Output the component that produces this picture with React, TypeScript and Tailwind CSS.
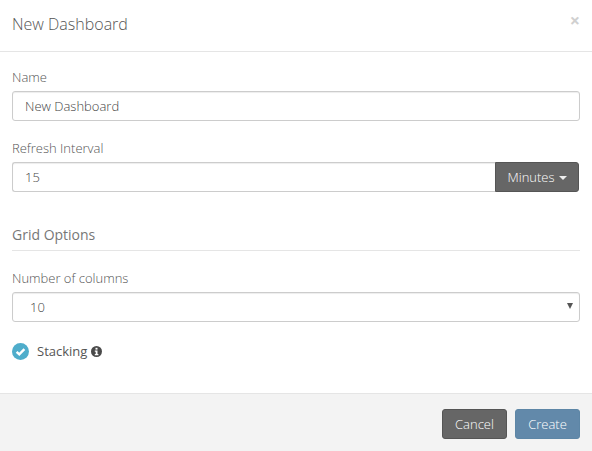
export default function App() {
  return (
    <div className="flex h-[451px] w-[592px] flex-col overflow-hidden bg-white font-['Open_Sans',sans-serif] text-[13px] font-light text-[#444]">
      <div className="flex h-[52px] items-start justify-between border-b border-[#e5e5e5] pl-3 pr-[12px] pt-[13px]">
        <h4 className="text-[16px] leading-[22px] font-light text-[#555]">New Dashboard</h4>
        <span className="text-[18px] leading-[14px] font-bold text-[#d0d0d0]">×</span>
      </div>

      <div className="flex-1 px-3 pt-[16px]">
        <label className="block h-[23px] text-[13px] leading-[18px] text-[#555]">Name</label>
        <div className="flex h-[30px] items-center rounded-[3px] border border-[#ccc] pl-3 pt-px shadow-[inset_0_1px_1px_rgba(0,0,0,0.075)]">
          New Dashboard
        </div>

        <label className="mt-[18px] block h-[23px] text-[13px] leading-[18px] text-[#555]">Refresh Interval</label>
        <div className="flex h-[30px]">
          <div className="flex flex-1 items-center rounded-l-[3px] border border-r-0 border-[#ccc] pl-3 pt-px shadow-[inset_0_1px_1px_rgba(0,0,0,0.075)]">
            15
          </div>
          <div className="mr-px flex w-[84px] items-center justify-center gap-1 rounded-r-[3px] border border-[#555] bg-[#666] pt-px text-[#fff]">
            Minutes
            <span className="mt-[1px] h-0 w-0 border-x-4 border-t-4 border-x-transparent border-t-[#eee]" />
          </div>
        </div>

        <div className="mt-[33px] h-[26px] border-b border-[#e5e5e5] text-[14px] leading-[20px] font-normal text-[#777]">Grid Options</div>

        <label className="mt-[18px] block h-[23px] text-[13px] leading-[18px] text-[#555]">Number of columns</label>
        <div className="relative flex h-[30px] items-center rounded-[3px] border border-[#ccc] pl-[17px] pt-px shadow-[inset_0_1px_1px_rgba(0,0,0,0.075)]">
          10
          <span className="absolute right-[6px] top-[10px] h-0 w-0 border-x-[3.5px] border-t-[6px] border-x-transparent border-t-[#555]" />
        </div>

        <div className="mt-[20px] flex items-center">
          <svg width="17" height="17" viewBox="0 0 17 17">
            <circle cx="8.5" cy="8.5" r="8.5" fill="#4fadcb" />
            <path d="M4.6 8.8 7.3 11.4 12.4 6.2" fill="none" stroke="#fff" strokeWidth="2.4" />
          </svg>
          <span className="ml-2 font-normal text-[#555]">Stacking</span>
          <svg className="ml-1" width="11" height="11" viewBox="0 0 11 11">
            <circle cx="5.5" cy="5.5" r="5.5" fill="#4a4a4a" />
            <rect x="4.5" y="1.8" width="2" height="1.8" fill="#fff" />
            <path d="M3.8 4.5H6.5V8H7.4V9.2H3.8V8H4.7V5.7H3.8Z" fill="#fff" />
          </svg>
        </div>
      </div>

      <div className="flex h-[58px] justify-end gap-2 border-t border-[#e5e5e5] bg-[#f3f3f3] pr-3 pt-[15px]">
        <div className="flex h-[30px] w-[65px] items-center justify-center rounded-[3px] border border-[#555] bg-[#666] pt-px text-[#fff]">Cancel</div>
        <div className="flex h-[30px] w-[65px] items-center justify-center rounded-[3px] border border-[#5d86a6] bg-[#6289aa] pt-px text-[#fff]">Create</div>
      </div>
    </div>
  )
}
